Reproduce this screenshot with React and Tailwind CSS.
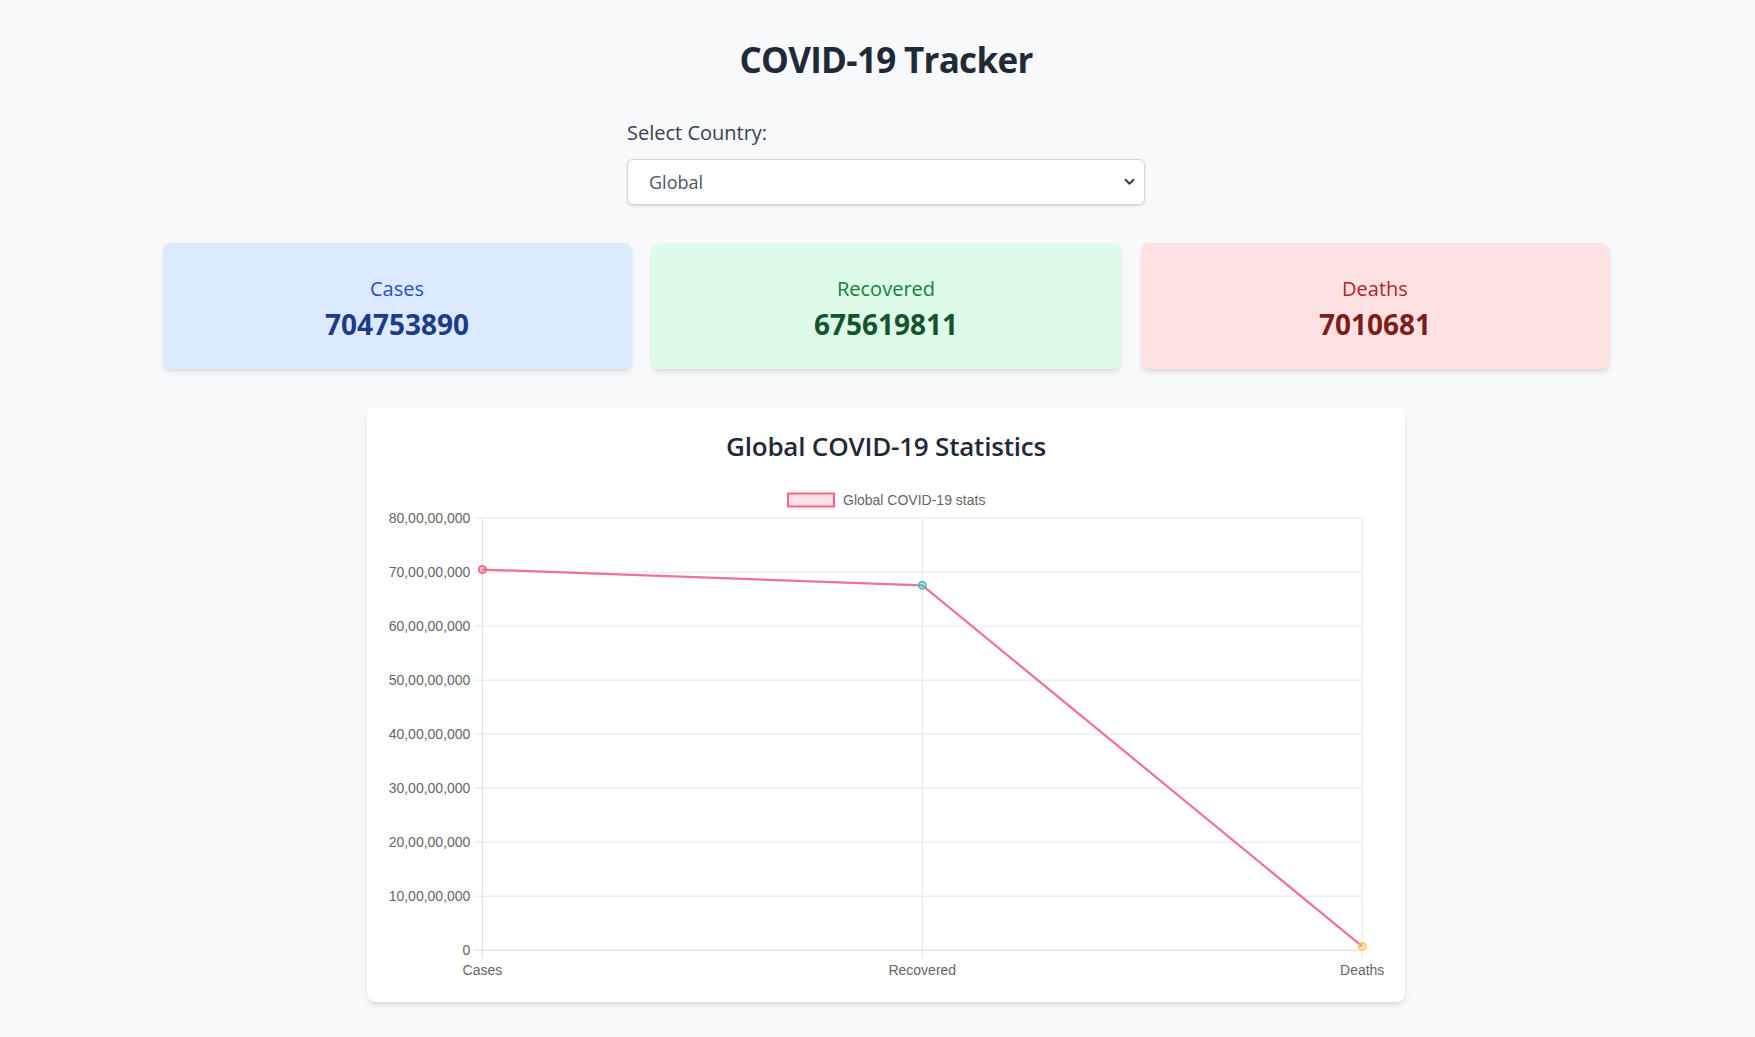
import React from "react";

const FONT = { fontFamily: '"Open Sans", "Noto Sans", sans-serif' };

const stats = [
  { label: "Cases", value: 704753890, bg: "bg-[#dbeafe]", lc: "text-[#1d4ed8]", vc: "text-[#1e3a8a]" },
  { label: "Recovered", value: 675619811, bg: "bg-[#dcfce7]", lc: "text-[#15803d]", vc: "text-[#14532d]" },
  { label: "Deaths", value: 7010681, bg: "bg-[#fee2e2]", lc: "text-[#b91c1c]", vc: "text-[#7f1d1d]" },
];

function Chart() {
  const x0 = 91.4;
  const xs = [91.4, 531.3, 971.2];
  const yTop = 40.1;
  const yBot = 472.2;
  const max = 800000000;
  const yOf = (v) => yBot - (v / max) * (yBot - yTop);
  const ticks = [0, 1, 2, 3, 4, 5, 6, 7, 8];
  const tickLabel = (i) => (i === 0 ? "0" : `${i}0,00,00,000`);
  const pts = stats.map((s, i) => [xs[i], yOf(s.value)]);
  const pointColors = [
    { stroke: "#ff6384", fill: "rgba(255,99,132,0.35)" },
    { stroke: "#4bc0c0", fill: "rgba(75,192,192,0.35)" },
    { stroke: "#ffce56", fill: "rgba(255,206,86,0.35)" },
  ];
  const chartFont = '"Liberation Sans", Arial, sans-serif';
  return (
    <svg width="990" height="510" viewBox="0 0 990 510" className="block overflow-visible">
      {/* legend */}
      <rect x="397" y="15.5" width="46" height="13" fill="rgba(255,99,132,0.2)" stroke="#ff6384" strokeWidth="2" />
      <text x="452" y="22" dominantBaseline="central" fontSize="14" fill="#666" fontFamily={chartFont}>
        Global COVID-19 stats
      </text>
      {/* horizontal grid */}
      {ticks.map((i) => {
        const y = yOf(i * 100000000);
        return (
          <g key={i}>
            <line x1={x0 - 8} y1={y} x2={xs[2]} y2={y} stroke={i === 0 ? "#d9d9d9" : "#e6e6e6"} strokeWidth="1" />
            <text x={x0 - 12} y={y} textAnchor="end" dominantBaseline="central" fontSize="14" fill="#666" fontFamily={chartFont}>
              {tickLabel(i)}
            </text>
          </g>
        );
      })}
      {/* vertical grid */}
      {xs.map((x, i) => (
        <g key={i}>
          <line x1={x} y1={yTop} x2={x} y2={yBot + 8} stroke={i === 0 ? "#d9d9d9" : "#e6e6e6"} strokeWidth="1" />
          <text x={x} y={492} textAnchor="middle" dominantBaseline="central" fontSize="14" fill="#666" fontFamily={chartFont}>
            {stats[i].label}
          </text>
        </g>
      ))}
      {/* line */}
      <polyline
        points={pts.map((p) => p.join(",")).join(" ")}
        fill="none"
        stroke="#ef7391"
        strokeWidth="2.2"
        strokeLinejoin="round"
      />
      {pts.map((p, i) => (
        <circle key={i} cx={p[0]} cy={p[1]} r="3.6" fill={pointColors[i].fill} stroke={pointColors[i].stroke} strokeWidth="1.8" />
      ))}
    </svg>
  );
}

export default function App() {
  return (
    <div className="min-h-screen bg-[#f8f9fb] pl-[17px] pt-10 pb-10" style={FONT}>
      <div className="mx-auto flex w-[1447px] flex-col items-center">
        <h1 className="mb-[39px] text-[35px] font-bold leading-10 tracking-[-0.7px] text-[#1f2937]">COVID-19 Tracker</h1>

        <div className="flex w-[518px] flex-col">
          <label className="mb-[12px] text-xl font-medium leading-7 text-[#374151]">Select Country:</label>
          <div className="relative">
            <select
              className="h-[46px] w-full appearance-none rounded-md border border-[#d1d5db] bg-white pl-[21px] text-lg text-[#4b5563] shadow-sm outline-none"
              style={FONT}
              defaultValue="Global"
            >
              <option>Global</option>
            </select>
            <svg
              className="pointer-events-none absolute right-[10px] top-1/2 -translate-y-1/2"
              width="11"
              height="8"
              viewBox="0 0 11 8"
            >
              <path d="M1.5 1.8 L5.5 5.8 L9.5 1.8" fill="none" stroke="#374151" strokeWidth="2" strokeLinecap="round" strokeLinejoin="round" />
            </svg>
          </div>
        </div>

        <div className="mt-[38px] grid w-full grid-cols-3 gap-5">
          {stats.map((s) => (
            <div
              key={s.label}
              className={`flex h-[126px] flex-col items-center justify-center rounded-lg pt-[5px] shadow-md ${s.bg}`}
            >
              <div className={`text-xl leading-7 ${s.lc}`}>{s.label}</div>
              <div className={`mt-[3px] text-[28px] font-bold leading-9 ${s.vc}`}>{s.value}</div>
            </div>
          ))}
        </div>

        <div className="mt-[39px] flex w-[1038px] flex-col items-center rounded-lg bg-white px-6 pt-[22px] pb-[14px] shadow-md">
          <h2 className="text-[26px] font-semibold leading-8 tracking-[-0.2px] text-[#1f2937]">Global COVID-19 Statistics</h2>
          <div className="mt-[16px]">
            <Chart />
          </div>
        </div>
      </div>
    </div>
  );
}
